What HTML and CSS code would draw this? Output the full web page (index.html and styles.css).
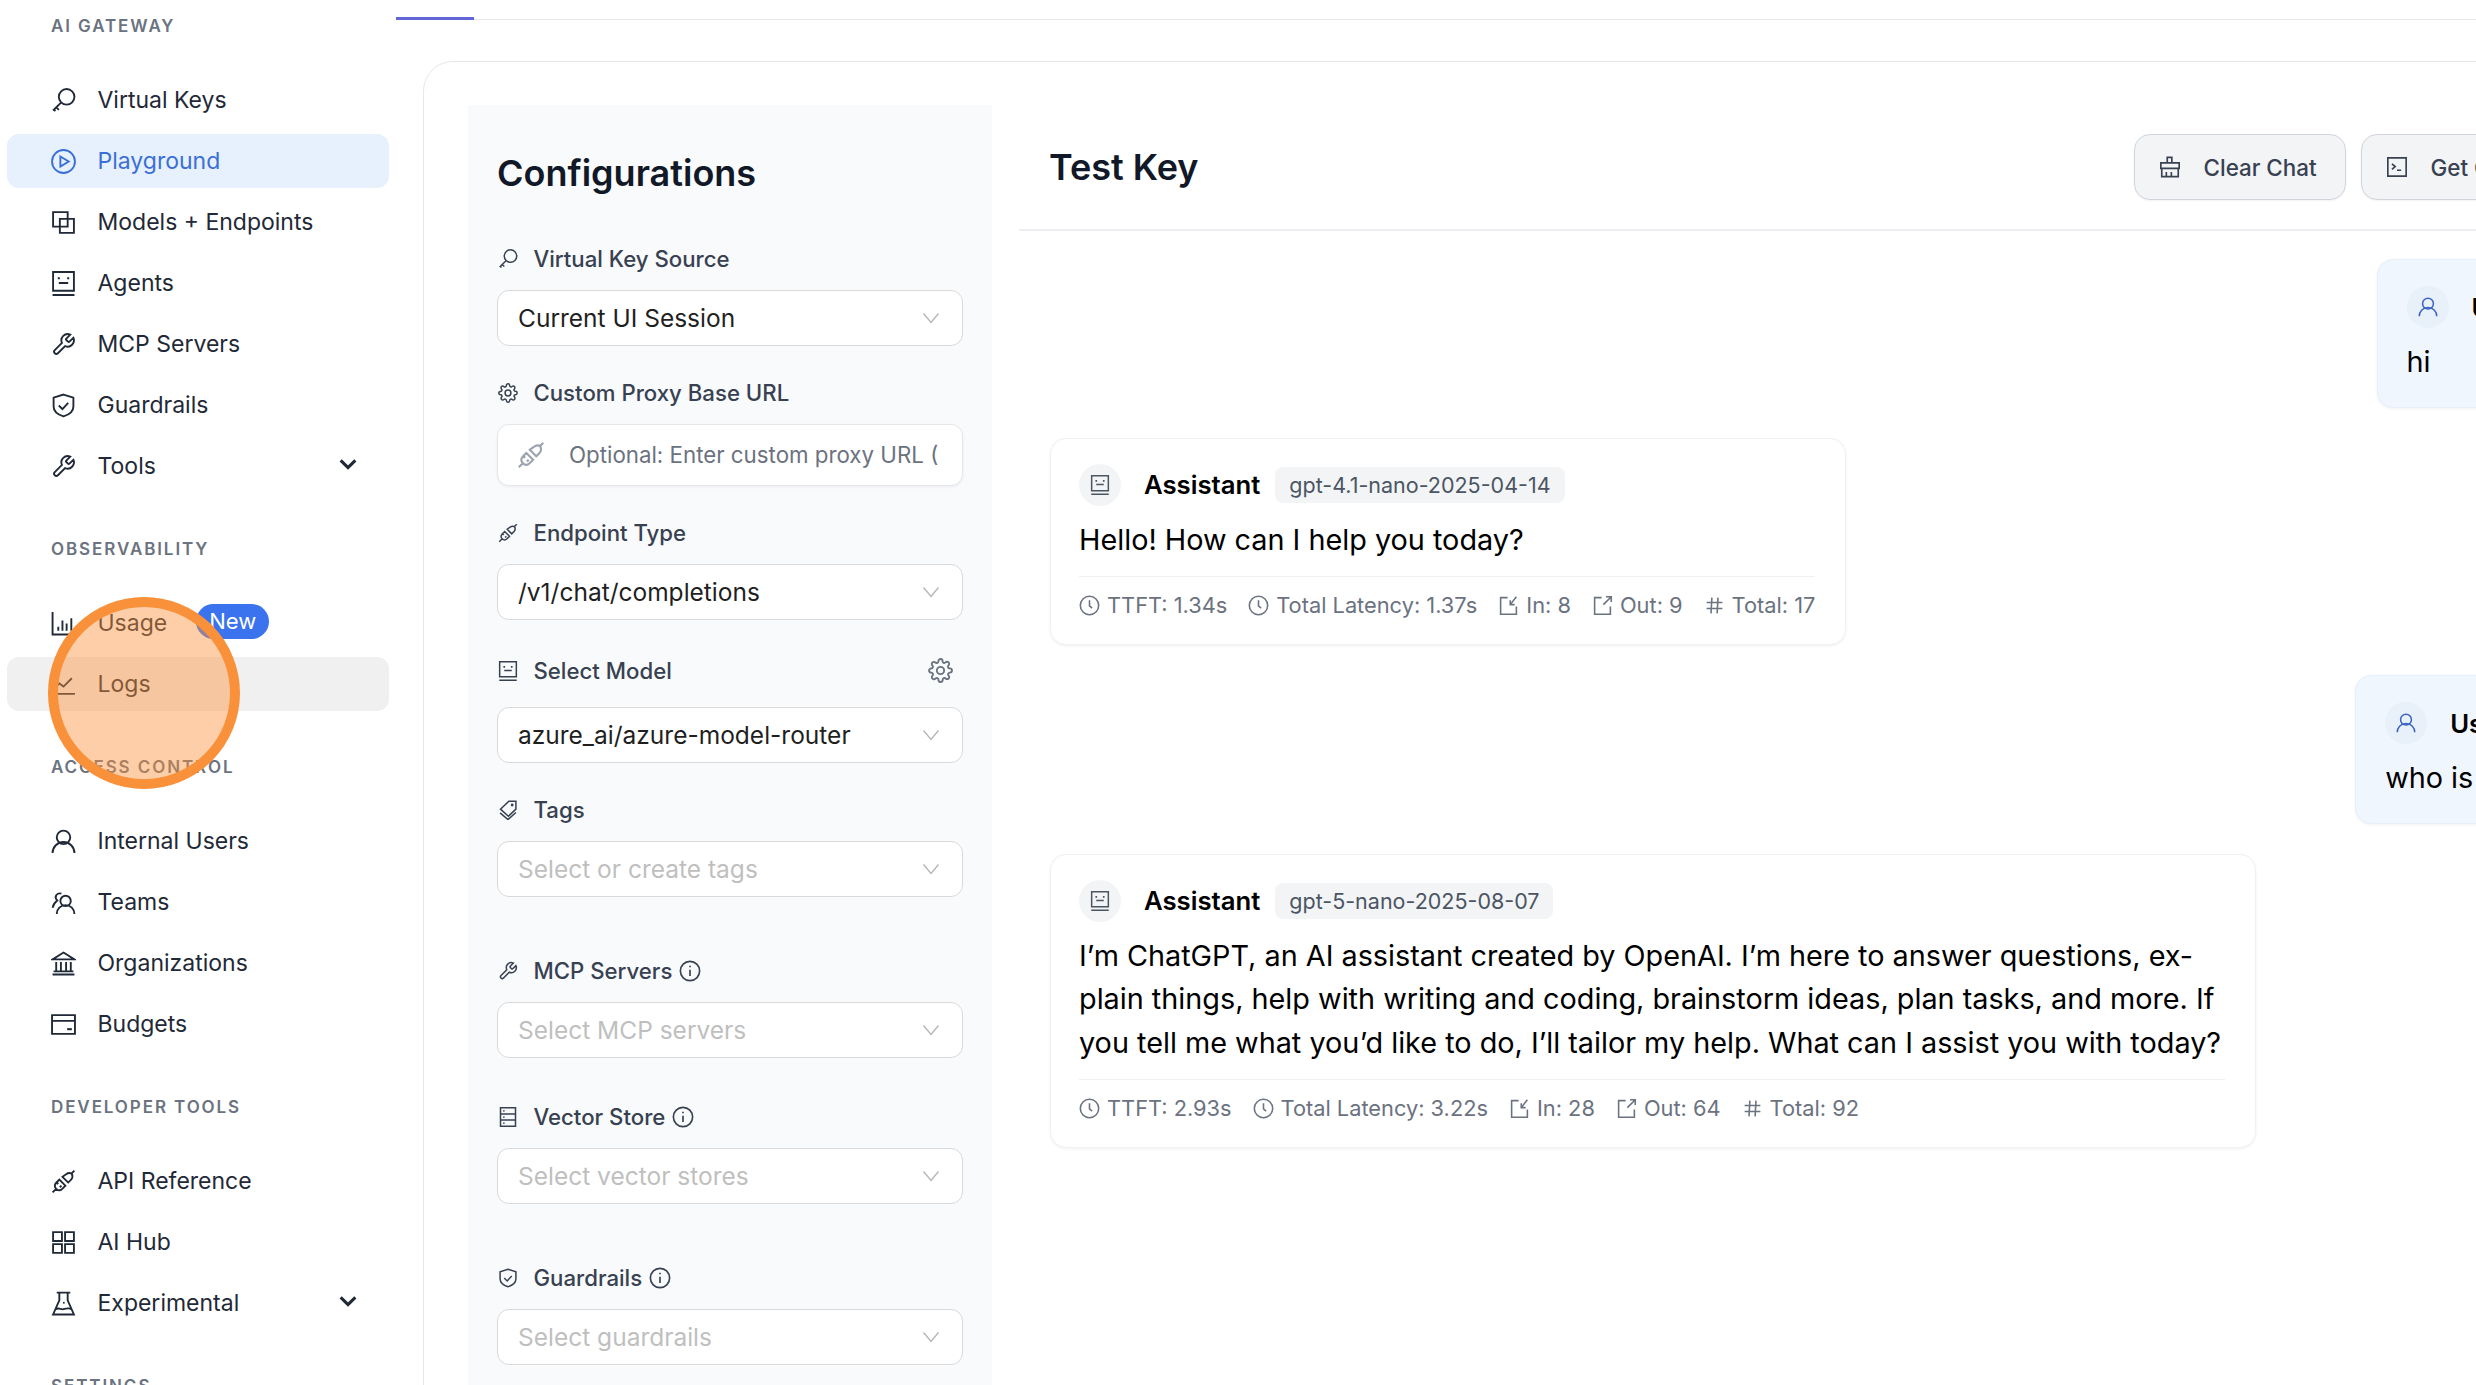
FILE: index.html
```html
<!DOCTYPE html>
<html lang="en">
  <head>
    <meta charset="UTF-8" />
    <title>Test Key</title>
    <link rel="stylesheet" href="styles.css">
  </head>
  <body>
    <svg class="sprite" xmlns="http://www.w3.org/2000/svg">
      <symbol id="i-key" viewBox="0 0 24 24"><circle cx="15" cy="8.500" r="7.500"/><path d="M9.600 14 2 21.600M5 18.600l2.600 2.400M2.600 20.600l1.600 1.600"/></symbol>
      <symbol id="i-play" viewBox="0 0 24 24"><circle cx="12" cy="12" r="11"/><path d="M9 7.200 17 12l-8 4.800z"/></symbol>
      <symbol id="i-block" viewBox="0 0 24 24"><path d="M2 2h14v14H2zM8.500 8.500H22V22H8.500z"/></symbol>
      <symbol id="i-robot" viewBox="0 0 24 24"><path d="M2 1h20v18H2zM1.500 23h21M7.500 11.500h9"/><path class="dots" d="M6.500 6h2v2h-2zM15.500 6h2v2h-2z"/></symbol>
      <symbol id="i-tool" viewBox="0 0 24 24"><path d="M14.700 6.300a1 1 0 0 0 0 1.400l1.600 1.600a1 1 0 0 0 1.400 0l3.770-3.770a6 6 0 0 1-7.940 7.940l-6.910 6.910a2.120 2.120 0 0 1-3-3l6.910-6.910a6 6 0 0 1 7.940-7.940l-3.760 3.760z"/></symbol>
      <symbol id="i-shield" viewBox="0 0 24 24"><path d="M12 1.500 21.500 4.500V13c0 5-4.500 8-9.500 9.500C7 21 2.500 18 2.500 13V4.500z"/><path d="M7.500 12l3.500 3.500 5.500-6"/></symbol>
      <symbol id="i-bars" viewBox="0 0 24 24"><path d="M1.500 1v21.500H23M7 19v-4M11 19V9M15 19v-7M19.500 19V7"/></symbol>
      <symbol id="i-line" viewBox="0 0 24 24"><path d="M1 21h22M2 16l6-5 4 3 8-8"/></symbol>
      <symbol id="i-user" viewBox="0 0 24 24"><circle cx="12" cy="8" r="6.500"/><path d="M1.500 23a10.500 10.500 0 0 1 21 0"/></symbol>
      <symbol id="i-team" viewBox="0 0 24 24"><circle cx="14" cy="10.500" r="5"/><path d="M5.500 23a8.500 8.500 0 0 1 17 0M10 3.500a4.500 4.500 0 0 0-5 1.500c-1 1.800-.3 3.800 1 5C3.500 12 2 14.500 1.500 17"/></symbol>
      <symbol id="i-bank" viewBox="0 0 24 24"><path d="M12 1.500 22.500 8h-21zM1.500 22.500h21M2.500 19.500h19M5 10.500v9M9.500 10.500v9M14.500 10.500v9M19 10.500v9"/></symbol>
      <symbol id="i-card" viewBox="0 0 24 24"><path d="M1 3h22v18H1zM1 8.500h22"/><path class="dots" d="M15.500 15.500h4.500v2h-4.500z"/></symbol>
      <symbol id="i-plug" viewBox="0 0 24 24"><path d="M1.500 22.500l3.500-3.500M5 19c-1.800-1.800-1.800-4 0-5.800l3-3 5.800 5.800-3 3c-1.800 1.800-4 1.800-5.800 0zM11 7.500l5.500 5.500 3-3c1.500-1.800 1.500-3.200.5-5.500-2-1.200-3.800-.8-5.500.5zM20 4l2.500-2.500M7 13l-1.500 1.500M10 16l-1.500 1.500"/></symbol>
      <symbol id="i-apps" viewBox="0 0 24 24"><path d="M2 2h8.500v8.500H2zM13.500 2H22v8.500h-8.500zM2 13.500h8.500V22H2zM13.500 13.500H22V22h-8.500z"/></symbol>
      <symbol id="i-flask" viewBox="0 0 24 24"><path d="M5.500 1.500h13M8 1.500V9L2 22.500h20L16 9V1.500M4.500 17.500c3-2 5 .8 7.500 0s5-1.500 7.500 0"/><path class="dots" d="M11.500 10.500h1.600v1.600h-1.600z"/></symbol>
      <symbol id="i-gear" viewBox="0 0 24 24"><circle cx="12" cy="12" r="3.500"/><path d="M19.400 15a1.650 1.650 0 0 0 .33 1.820l.06.06a2 2 0 0 1 0 2.830 2 2 0 0 1-2.830 0l-.06-.06a1.650 1.650 0 0 0-1.820-.33 1.650 1.650 0 0 0-1 1.510V21a2 2 0 0 1-2 2 2 2 0 0 1-2-2v-.09A1.650 1.650 0 0 0 9 19.400a1.650 1.650 0 0 0-1.820.33l-.06.06a2 2 0 0 1-2.830 0 2 2 0 0 1 0-2.830l.06-.06a1.650 1.650 0 0 0 .33-1.820 1.650 1.650 0 0 0-1.510-1H3a2 2 0 0 1-2-2 2 2 0 0 1 2-2h.09A1.650 1.650 0 0 0 4.600 9a1.650 1.650 0 0 0-.33-1.820l-.06-.06a2 2 0 0 1 0-2.830 2 2 0 0 1 2.830 0l.06.06a1.650 1.650 0 0 0 1.820.33H9a1.650 1.650 0 0 0 1-1.510V3a2 2 0 0 1 2-2 2 2 0 0 1 2 2v.09a1.650 1.650 0 0 0 1 1.510 1.650 1.650 0 0 0 1.820-.33l.06-.06a2 2 0 0 1 2.830 0 2 2 0 0 1 0 2.830l-.06.06a1.650 1.650 0 0 0-.33 1.820V9a1.650 1.650 0 0 0 1.510 1H21a2 2 0 0 1 2 2 2 2 0 0 1-2 2h-.09a1.650 1.650 0 0 0-1.510 1z"/></symbol>
      <symbol id="i-tags" viewBox="0 0 24 24"><path d="M13 1.500h8.500V11l-9 8.500L3 11zM2.500 15.500l9.500 8 9.500-8.500"/><circle cx="17" cy="6" r=".8"/></symbol>
      <symbol id="i-db" viewBox="0 0 24 24"><path d="M3 1h18v22H3zM3 8.300h18M3 15.700h18"/><path class="dots" d="M6 4h2v1.500H6zM6 11.300h2v1.500H6zM6 18.700h2v1.500H6z"/></symbol>
      <symbol id="i-broom" viewBox="0 0 24 24"><path d="M9 7.500V1.500h5v6M2 7.500h20v6H2zM3 13.500v9h18v-9M8 22.500v-5M13.500 22.500v-5"/></symbol>
      <symbol id="i-code" viewBox="0 0 24 24"><path d="M2 2h20v20H2zM6.500 8.500l3.500 3-3.500 3M12 15.500h4.500"/></symbol>
      <symbol id="i-clock" viewBox="0 0 24 24"><circle cx="12" cy="12" r="10.500"/><path d="M12 6v6.500l3 2.500"/></symbol>
      <symbol id="i-in" viewBox="0 0 24 24"><path d="M11 3H3v19h18v-9M21 2l-7 9M14 6v5h5"/></symbol>
      <symbol id="i-out" viewBox="0 0 24 24"><path d="M11 3H3v19h18v-9M13 11l9-9M16 2h6v6"/></symbol>
      <symbol id="i-hash" viewBox="0 0 24 24"><path d="M3 8.500h18M3 15.500h18M9 3 8 21M16 3l-1 18"/></symbol>
      <symbol id="i-info" viewBox="0 0 24 24"><circle cx="12" cy="12" r="10.500"/><path d="M12 10.500v7M12 6.200v1.800"/></symbol>
      <symbol id="i-caret" viewBox="0 0 24 24"><path d="M4 8l8 8 8-8"/></symbol>
      <symbol id="i-down" viewBox="0 0 24 24"><path d="M2 6l10 12L22 6"/></symbol>
    </svg>

    <div class="page">
      <aside class="sidebar">
        <div class="nav-label nav-label-first">AI GATEWAY</div>
        <a class="nav-item"><svg class="icon"><use href="#i-key"/></svg>Virtual Keys</a>
        <a class="nav-item active"><svg class="icon"><use href="#i-play"/></svg>Playground</a>
        <a class="nav-item"><svg class="icon"><use href="#i-block"/></svg>Models + Endpoints</a>
        <a class="nav-item"><svg class="icon"><use href="#i-robot"/></svg>Agents</a>
        <a class="nav-item"><svg class="icon"><use href="#i-tool"/></svg>MCP Servers</a>
        <a class="nav-item"><svg class="icon"><use href="#i-shield"/></svg>Guardrails</a>
        <a class="nav-item"><svg class="icon"><use href="#i-tool"/></svg>Tools<svg class="caret"><use href="#i-caret"/></svg></a>

        <div class="nav-label">OBSERVABILITY</div>
        <a class="nav-item"><svg class="icon"><use href="#i-bars"/></svg>Usage<span class="new-badge">New</span></a>
        <a class="nav-item hovered"><svg class="icon"><use href="#i-line"/></svg>Logs</a>

        <div class="nav-label">ACCESS CONTROL</div>
        <a class="nav-item"><svg class="icon"><use href="#i-user"/></svg>Internal Users</a>
        <a class="nav-item"><svg class="icon"><use href="#i-team"/></svg>Teams</a>
        <a class="nav-item"><svg class="icon"><use href="#i-bank"/></svg>Organizations</a>
        <a class="nav-item"><svg class="icon"><use href="#i-card"/></svg>Budgets</a>

        <div class="nav-label">DEVELOPER TOOLS</div>
        <a class="nav-item"><svg class="icon"><use href="#i-plug"/></svg>API Reference</a>
        <a class="nav-item"><svg class="icon"><use href="#i-apps"/></svg>AI Hub</a>
        <a class="nav-item"><svg class="icon"><use href="#i-flask"/></svg>Experimental<svg class="caret"><use href="#i-caret"/></svg></a>

        <div class="nav-label">SETTINGS</div>
      </aside>

      <main class="main">
        <div class="tabs"><div class="tab-active"></div></div>
        <div class="board">
          <section class="config">
            <h2>Configurations</h2>

            <div class="field">
              <label><svg class="icon-sm"><use href="#i-key"/></svg>Virtual Key Source</label>
              <div class="select">Current UI Session<svg class="arrow"><use href="#i-down"/></svg></div>
            </div>

            <div class="field">
              <label><svg class="icon-sm"><use href="#i-gear"/></svg>Custom Proxy Base URL</label>
              <div class="text-input"><svg class="icon-input"><use href="#i-plug"/></svg><span>Optional: Enter custom proxy URL (</span></div>
            </div>

            <div class="field field-model-gap">
              <label><svg class="icon-sm"><use href="#i-plug"/></svg>Endpoint Type</label>
              <div class="select">/v1/chat/completions<svg class="arrow"><use href="#i-down"/></svg></div>
            </div>

            <div class="field">
              <label class="label-spaced"><svg class="icon-sm"><use href="#i-robot"/></svg>Select Model<svg class="label-gear"><use href="#i-gear"/></svg></label>
              <div class="select">azure_ai/azure-model-router<svg class="arrow"><use href="#i-down"/></svg></div>
            </div>

            <div class="field field-xl">
              <label><svg class="icon-sm"><use href="#i-tags"/></svg>Tags</label>
              <div class="select empty">Select or create tags<svg class="arrow"><use href="#i-down"/></svg></div>
            </div>

            <div class="field field-lg">
              <label><svg class="icon-sm"><use href="#i-tool"/></svg>MCP Servers<svg class="info"><use href="#i-info"/></svg></label>
              <div class="select empty">Select MCP servers<svg class="arrow"><use href="#i-down"/></svg></div>
            </div>

            <div class="field field-xl">
              <label><svg class="icon-sm"><use href="#i-db"/></svg>Vector Store<svg class="info"><use href="#i-info"/></svg></label>
              <div class="select empty">Select vector stores<svg class="arrow"><use href="#i-down"/></svg></div>
            </div>

            <div class="field">
              <label><svg class="icon-sm"><use href="#i-shield"/></svg>Guardrails<svg class="info"><use href="#i-info"/></svg></label>
              <div class="select empty">Select guardrails<svg class="arrow"><use href="#i-down"/></svg></div>
            </div>
          </section>

          <section class="chat">
            <header class="chat-head">
              <h1>Test Key</h1>
              <div class="chat-actions">
                <button><svg class="icon-btn"><use href="#i-broom"/></svg>Clear Chat</button>
                <button><svg class="icon-btn"><use href="#i-code"/></svg>Get Code</button>
              </div>
            </header>

            <div class="thread">
              <article class="msg msg-user">
                <div class="msg-head"><span class="avatar"><svg><use href="#i-user"/></svg></span><strong>User</strong></div>
                <p>hi</p>
              </article>

              <article class="msg">
                <div class="msg-head"><span class="avatar"><svg><use href="#i-robot"/></svg></span><strong>Assistant</strong><span class="model-tag">gpt-4.1-nano-2025-04-14</span></div>
                <p>Hello! How can I help you today?</p>
                <div class="stats">
                  <span><svg><use href="#i-clock"/></svg>TTFT: 1.34s</span>
                  <span><svg><use href="#i-clock"/></svg>Total Latency: 1.37s</span>
                  <span><svg><use href="#i-in"/></svg>In: 8</span>
                  <span><svg><use href="#i-out"/></svg>Out: 9</span>
                  <span><svg><use href="#i-hash"/></svg>Total: 17</span>
                </div>
              </article>

              <article class="msg msg-user">
                <div class="msg-head"><span class="avatar"><svg><use href="#i-user"/></svg></span><strong>User</strong></div>
                <p>who is this</p>
              </article>

              <article class="msg msg-wide">
                <div class="msg-head"><span class="avatar"><svg><use href="#i-robot"/></svg></span><strong>Assistant</strong><span class="model-tag">gpt-5-nano-2025-08-07</span></div>
                <p>I’m ChatGPT, an AI assistant created by OpenAI. I’m here to answer questions, ex-<br>plain things, help with writing and coding, brainstorm ideas, plan tasks, and more. If<br>you tell me what you’d like to do, I’ll tailor my help. What can I assist you with today?</p>
                <div class="stats">
                  <span><svg><use href="#i-clock"/></svg>TTFT: 2.93s</span>
                  <span><svg><use href="#i-clock"/></svg>Total Latency: 3.22s</span>
                  <span><svg><use href="#i-in"/></svg>In: 28</span>
                  <span><svg><use href="#i-out"/></svg>Out: 64</span>
                  <span><svg><use href="#i-hash"/></svg>Total: 92</span>
                </div>
              </article>
            </div>
          </section>
        </div>
      </main>
    </div>

    <div class="click-ring"></div>
  </body>
</html>
```

FILE: styles.css
```css
html,
body {
  height: 100%;
  margin: 0;
  overflow: hidden;
  background: #fff;
  font-family: Inter, "Liberation Sans", sans-serif;
  color: #1f2937;
}
svg {
  fill: none;
  stroke: currentColor;
  stroke-width: 1.8;
}
.sprite {
  display: none;
}
.dots {
  fill: currentColor;
  stroke: none;
}
.page {
  display: flex;
  height: 1385px;
  overflow: hidden;
}

/* sidebar */
.sidebar {
  flex: 0 0 396px;
  padding: 15px 7px 0;
  box-sizing: border-box;
}
.nav-label {
  height: 22px;
  line-height: 22px;
  margin: 45px 0 36px 44px;
  font-size: 17px;
  font-weight: 600;
  letter-spacing: 1.9px;
  color: #6b7280;
}
.nav-label-first {
  margin-top: 0;
}
.nav-item {
  display: flex;
  align-items: center;
  height: 54px;
  margin-bottom: 7px;
  padding-left: 44px;
  border-radius: 12px;
  font-size: 23px;
  color: #1f2937;
}
.nav-item:last-of-type {
  margin-bottom: 0;
}
.nav-item.active {
  background: #e6f1fd;
  color: #3b6fd8;
}
.nav-item.hovered {
  background: #f0f0f0;
}
.icon {
  width: 25px;
  height: 25px;
  margin-right: 21.5px;
  flex: none;
}
.caret {
  width: 22px;
  height: 22px;
  margin-left: auto;
  margin-right: 30px;
  margin-top: -4px;
  stroke-width: 3.4;
}
.new-badge {
  margin-left: 29px;
  padding: 0 13px;
  height: 35px;
  line-height: 35px;
  margin-top: -4px;
  border-radius: 18px;
  background: #3b73ee;
  color: #fff;
  font-size: 22px;
}

/* main area */
.main {
  flex: none;
  width: 2300px;
}
.tabs {
  height: 20px;
  border-bottom: 1px solid #e5e7eb;
  box-sizing: border-box;
  position: relative;
}
.tab-active {
  position: absolute;
  left: 0;
  bottom: -1px;
  width: 78px;
  height: 3px;
  background: #6366d8;
}
.board {
  display: flex;
  gap: 27px;
  width: 2196px;
  height: 1400px;
  margin: 41px 0 0 27px;
  padding: 43px 20px 0 44px;
  box-sizing: border-box;
  border: 1px solid #e5e7eb;
  border-radius: 30px;
  background: #fff;
}

/* config panel */
.config {
  flex: 0 0 524px;
  padding: 46px 29px 0;
  box-sizing: border-box;
  background: #f9fafb;
}
.config h2 {
  margin: 0 0 48.5px;
  font-size: 36px;
  line-height: 44px;
  font-weight: 600;
  color: #111827;
}
.field {
  margin-bottom: 32px;
}
.field-model-gap {
  margin-bottom: 36px;
}
.field-lg {
  margin-bottom: 44px;
}
.field-xl {
  margin-bottom: 59px;
}
.field label {
  display: flex;
  align-items: center;
  height: 30px;
  margin-bottom: 16px;
  font-size: 22.2px;
  font-weight: 500;
  color: #374151;
}
.field .label-spaced {
  margin-bottom: 21px;
}
.icon-sm {
  width: 20px;
  height: 20px;
  margin-left: 1px;
  margin-right: 15.5px;
  flex: none;
}
.label-gear {
  width: 25px;
  height: 25px;
  margin-left: auto;
  margin-right: 10px;
  color: #6b7280;
}
.info {
  width: 22px;
  height: 22px;
  margin-left: 7px;
}
.select,
.text-input {
  display: flex;
  align-items: center;
  height: 56px;
  padding: 0 20px;
  box-sizing: border-box;
  border: 1px solid #d9d9d9;
  border-radius: 12px;
  background: #fff;
  font-size: 24.5px;
  color: #1f1f1f;
}
.select.empty {
  color: #bfbfbf;
}
.text-input {
  height: 62px;
  border-color: #e5e7eb;
  box-shadow: 0 1px 3px rgba(0, 0, 0, 0.06);
  color: #6b7280;
  font-size: 22.3px;
  white-space: nowrap;
}
.icon-input {
  width: 28px;
  height: 28px;
  margin-right: 24px;
  margin-left: -1px;
  flex: none;
  color: #9ca3af;
}
.arrow {
  width: 18px;
  height: 18px;
  margin-left: auto;
  margin-right: 2px;
  color: #b5b5b5;
  stroke-width: 1.8;
}

/* chat panel */
.chat {
  flex: 1;
  min-width: 0;
}
.chat-head {
  display: flex;
  align-items: center;
  justify-content: space-between;
  padding: 29px 38px 29px 30px;
  border-bottom: 2px solid #eceef1;
}
.chat-head h1 {
  margin: 0;
  font-size: 36px;
  font-weight: 600;
  color: #111827;
}
.chat-actions {
  display: flex;
  gap: 15px;
}
.chat-actions button {
  display: flex;
  align-items: center;
  height: 66px;
  padding: 0 28px 0 24px;
  border: 1px solid #d1d5db;
  border-radius: 16px;
  background: #f3f4f6;
  box-shadow: 0 1px 2px rgba(0, 0, 0, 0.05);
  font-family: inherit;
  font-size: 22.4px;
  font-weight: 500;
  color: #374151;
}
.icon-btn {
  width: 22px;
  height: 22px;
  margin-right: 23px;
}
.thread {
  display: flex;
  flex-direction: column;
  align-items: flex-start;
  gap: 30px;
  padding: 28px 38px 0 31px;
}
.msg {
  padding: 25px 30px 25px 28px;
  border: 1px solid #f0f1f3;
  border-radius: 16px;
  background: #fff;
  box-shadow: 0 1px 3px rgba(0, 0, 0, 0.06);
  color: #000;
}
.msg-wide {
  width: 1206px;
  box-sizing: border-box;
}
.msg-user {
  align-self: flex-end;
  padding: 26px 29px 23px;
  background: #f0f6fe;
  border-color: #e8eff9;
}
.msg-head {
  display: flex;
  align-items: center;
  height: 42px;
}
.msg-head strong {
  margin-left: 23px;
  font-size: 25.7px;
  font-weight: 600;
}
.avatar {
  display: flex;
  align-items: center;
  justify-content: center;
  width: 42px;
  height: 42px;
  border-radius: 50%;
  background: #f3f4f6;
  color: #4b5563;
}
.avatar svg {
  width: 20px;
  height: 20px;
}
.msg-user .avatar {
  background: #e8f0fa;
  color: #3b62c4;
}
.model-tag {
  margin-left: 15px;
  padding: 0 14px;
  height: 36px;
  line-height: 36px;
  border-radius: 8px;
  background: #f3f4f6;
  font-size: 21.5px;
  color: #4b5563;
}
.msg p {
  margin: 12px 0 0;
  font-size: 28.8px;
  line-height: 43.5px;
}
.stats {
  display: flex;
  gap: 21px;
  margin-top: 15px;
  padding-top: 14px;
  border-top: 1px solid #f0f1f3;
  font-size: 21.8px;
  line-height: 28px;
  color: #6b7280;
}
.stats span {
  display: flex;
  align-items: center;
  gap: 7px;
}
.stats svg {
  width: 21px;
  height: 21px;
}

/* orange click highlight from the recording */
.click-ring {
  position: absolute;
  left: 48px;
  top: 597px;
  width: 192px;
  height: 192px;
  box-sizing: border-box;
  border: 10px solid #f9913b;
  border-radius: 50%;
  background: rgba(251, 146, 60, 0.45);
}
```
